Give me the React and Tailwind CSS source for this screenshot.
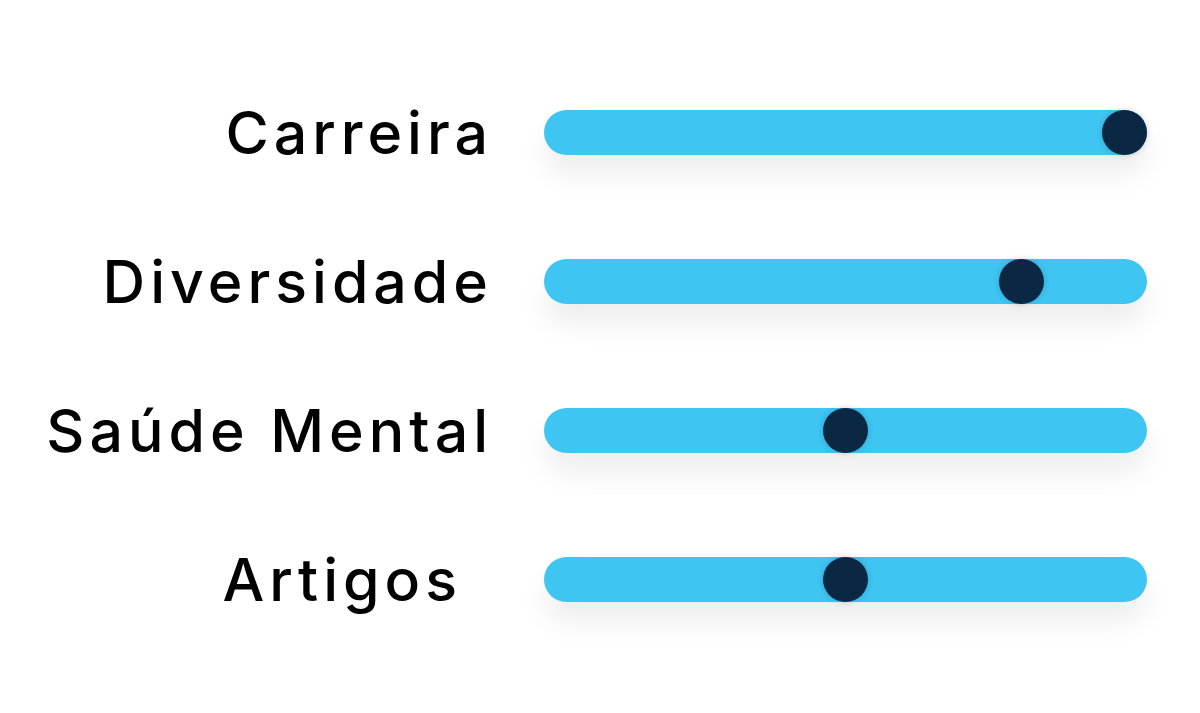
import React from 'react';

const topics = [
  { label: 'Carreira', value: 100 },
  { label: 'Diversidade', value: 81.5 },
  { label: 'Saúde Mental', value: 50 },
  { label: 'Artigos', value: 50, pad: 'pr-[31px]' },
];

// knob travel = track width minus knob size
const TRAVEL = 603 - 45;

const Slider = ({ value }) => (
  <div className="relative w-[603px] h-[45px] rounded-full bg-[#3ec5f2] shadow-[0_20px_28px_rgba(0,0,0,0.07)]">
    <div
      className="absolute top-0 w-[45px] h-[45px] rounded-full bg-[#0a2744] shadow-[0_0_6px_rgba(0,0,0,0.18)]"
      style={{ left: (value / 100) * TRAVEL }}
    />
  </div>
);

export default function App() {
  return (
    <div className="w-[1200px] h-[713px] bg-white pt-[110px]" style={{ fontFamily: 'Inter, "Open Sans", sans-serif' }}>
      <div className="flex flex-col gap-[104px]">
        {topics.map(t => (
          <div key={t.label} className="flex items-center h-[45px]">
            <div className={`w-[493px] text-right text-black text-[59px] leading-none font-medium tracking-[5px] ${t.pad || ''}`}>
              {t.label}
            </div>
            <div className="ml-[51px]">
              <Slider value={t.value} />
            </div>
          </div>
        ))}
      </div>
    </div>
  );
}
